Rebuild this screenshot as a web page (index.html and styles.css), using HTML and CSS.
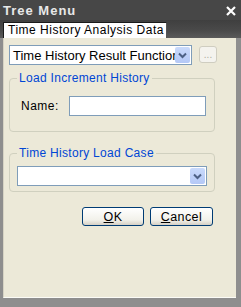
FILE: index.html
```html
<!DOCTYPE html>
<html lang="en">
<head>
  <meta charset="UTF-8">
  <title>Tree Menu</title>
  <link rel="stylesheet" href="styles.css">
</head>
<body>
  <div class="window">
    <div class="titlebar">
      <span class="title">Tree Menu</span>
      <svg class="close" width="10" height="10" viewBox="0 0 10 10">
        <path d="M1 1 L9 9 M9 1 L1 9" stroke="#fff" stroke-width="2.2" fill="none"/>
      </svg>
    </div>
    <div class="tabstrip">
      <div class="tab">Time History Analysis Data</div>
    </div>
    <div class="content">
      <div class="combo-row">
        <div class="combo combo-main">
          <span class="combo-text">Time History Result Function</span>
          <span class="drop">
            <svg width="9" height="7" viewBox="0 0 9 7"><path d="M1 1.5 L4.5 5 L8 1.5" stroke="#4d6185" stroke-width="2" fill="none"/></svg>
          </span>
        </div>
        <button class="dots" disabled>...</button>
      </div>

      <fieldset class="group group-inc">
        <legend>Load Increment History</legend>
        <div class="name-row">
          <label for="name">Name:</label>
          <input type="text" id="name">
        </div>
      </fieldset>

      <fieldset class="group group-case">
        <legend>Time History Load Case</legend>
        <div class="combo combo-case">
          <span class="combo-text"></span>
          <span class="drop">
            <svg width="9" height="7" viewBox="0 0 9 7"><path d="M1 1.5 L4.5 5 L8 1.5" stroke="#4d6185" stroke-width="2" fill="none"/></svg>
          </span>
        </div>
      </fieldset>

      <div class="actions">
        <button class="btn"><u>O</u>K</button>
        <button class="btn"><u>C</u>ancel</button>
      </div>
    </div>
  </div>
</body>
</html>
```

FILE: styles.css
```css
body {
  margin: 0;
  padding: 0;
  background-color: #9a9a9a;
  font-family: "Liberation Sans", Arial, sans-serif;
}

.window {
  width: 241px;
  height: 307px;
  background-color: #8e8e8e;
  overflow: hidden;
}

.titlebar {
  height: 20px;
  background-color: #474747;
  display: flex;
  align-items: center;
  justify-content: space-between;
  padding: 0 5px 0 3px;
}

.title {
  color: #e8e8e8;
  font-weight: bold;
  font-size: 13px;
  letter-spacing: 1px;
}

.close {
  margin-top: 1px;
}

.tabstrip {
  height: 18px;
  padding: 2px 0 0 3px;
  box-sizing: border-box;
  background: linear-gradient(#3f3f3f, #4a4a4a 60%, #5a5a5a);
}

.tab {
  width: 164px;
  height: 16px;
  box-sizing: border-box;
  background-color: #fff;
  border: 1px solid #1a1a1a;
  border-bottom: none;
  border-right-color: #555;
  font-size: 12px;
  line-height: 15px;
  padding-left: 4px;
  color: #000;
  letter-spacing: 0.5px;
}

.content {
  margin: 0 5px 0 3px;
  height: 260px;
  box-sizing: border-box;
  background-color: #ece9d8;
  border-left: 1px solid #d6d3c4;
  border-bottom: 1px solid #fbfbf6;
  padding-top: 7px;
}

.combo-row {
  display: flex;
  align-items: flex-start;
  padding-left: 5px;
}

.combo {
  display: flex;
  align-items: center;
  box-sizing: border-box;
  background-color: #fff;
  border: 1px solid #7f9db9;
}

.combo-main {
  width: 183px;
  height: 20px;
}

.combo-text {
  flex: 1;
  overflow: hidden;
  white-space: nowrap;
  font-size: 13px;
  padding-left: 3px;
  color: #000;
}

.drop {
  width: 15px;
  height: 16px;
  margin-right: 1px;
  border-radius: 2px;
  background: linear-gradient(#c9dafb, #b4c8f6);
  display: flex;
  align-items: center;
  justify-content: center;
}

.dots {
  margin-left: 7px;
  margin-top: 1px;
  width: 18px;
  height: 17px;
  padding: 0;
  border: 1px solid #cfcdc0;
  border-radius: 3px;
  background-color: #f4f3ee;
  color: #b0ad9e;
  font-size: 10px;
  line-height: 10px;
  font-family: "Liberation Sans", Arial, sans-serif;
}

.group {
  margin: 6px 0 0 5px;
  width: 206px;
  box-sizing: border-box;
  border: 1px solid #d0d0bf;
  border-radius: 4px;
  padding: 0 7px;
}

.group legend {
  color: #0046d5;
  font-size: 12px;
  line-height: 14px;
  padding: 0 2px;
  letter-spacing: 0.3px;
}

.group-inc {
  padding-top: 11px;
  padding-bottom: 15px;
}

.name-row {
  display: flex;
  align-items: center;
}

.name-row label {
  font-size: 12px;
  width: 48px;
  padding-left: 4px;
  letter-spacing: 0.5px;
}

.name-row input {
  width: 137px;
  height: 20px;
  box-sizing: border-box;
  border: 1px solid #7f9db9;
  padding: 0 3px;
  margin: 0;
}

.group-case {
  margin-top: 14px;
  padding-top: 6px;
  padding-bottom: 5px;
}

.combo-case {
  width: 190px;
  height: 20px;
}

.actions {
  display: flex;
  justify-content: flex-end;
  gap: 6px;
  margin-top: 15px;
  padding-right: 23px;
}

.btn {
  height: 19px;
  box-sizing: border-box;
  border: 1px solid #003c74;
  border-radius: 3px;
  background: linear-gradient(#fff, #f2f1ea 70%, #d6d0c5);
  font-family: "Liberation Sans", Arial, sans-serif;
  font-size: 12.5px;
  padding: 0;
  color: #000;
  letter-spacing: 0.4px;
}

.btn:first-child {
  width: 62px;
}

.btn:last-child {
  width: 63px;
}
```
